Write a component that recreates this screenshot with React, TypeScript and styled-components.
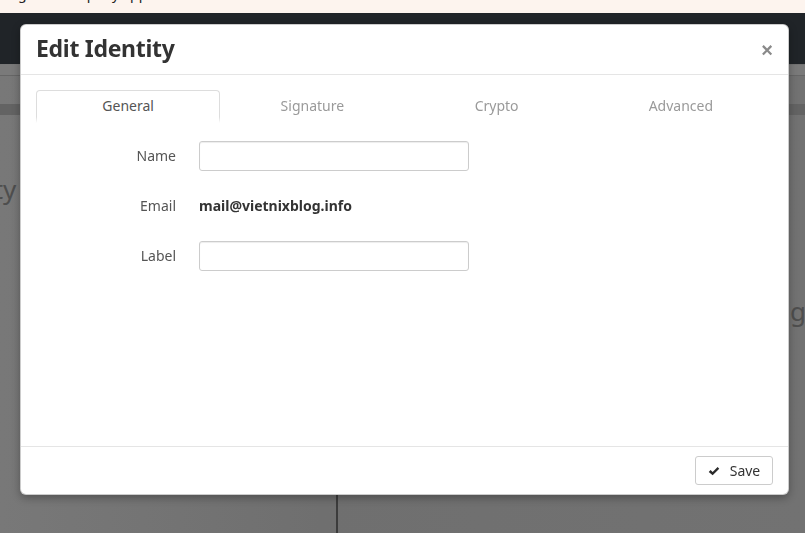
import React, { FC, useState } from 'react';
import styled, { createGlobalStyle, css } from 'styled-components';

const GlobalStyle = createGlobalStyle`
  html, body {
    margin: 0;
    padding: 0;
    overflow: hidden;
  }
  body {
    font-family: "Noto Sans", "Open Sans", "DejaVu Sans", sans-serif;
    font-size: 14px;
    color: #333;
  }
  * {
    box-sizing: border-box;
  }
`

// page behind the dialog, already dimmed by the backdrop
const PageStyle = styled.div`
  width: 100vw;
  height: 100vh;
  display: flex;
  flex-direction: column;
  background: linear-gradient(90deg, #787878 0%, #6f6f6f 40%, #727272 100%);
  overflow: hidden;
`

const TopStripStyle = styled.div`
  height: 13px;
  background: #fdf4ee;
  overflow: hidden;
  padding-left: 18px;
  & > span {
    display: block;
    margin-top: -15px;
    font-size: 14px;
    line-height: 18px;
    color: #222;
  }
`

const NavBarStyle = styled.div`
  height: 51px;
  background: #202428;
`

const BandStyle = styled.div<{ $tone: 'light' | 'dark'; $gap: number }>`
  height: 11px;
  margin-top: ${(p) => p.$gap}px;
  ${(p) =>
    p.$tone === 'light'
      ? css`background: #7a7a7a; border-bottom: 1px solid #666;`
      : css`background: #636363;`}
`

const ColumnsStyle = styled.div`
  flex: 1;
  display: grid;
  grid-template-columns: 338px 1fr;
`

const LeftColStyle = styled.div`
  border-right: 2px solid #3c3c3c;
  overflow: hidden;
  & > h2 {
    margin: 56px 0 0 -78px;
    font-size: 26px;
    font-weight: 400;
    color: #4e4e4e;
    white-space: nowrap;
  }
`

const RightColStyle = styled.div`
  overflow: hidden;
  display: flex;
  justify-content: flex-end;
  align-items: flex-start;
  & > h2 {
    margin: 178px -1px 0 0;
    font-size: 26px;
    font-weight: 400;
    color: #4e4e4e;
    white-space: nowrap;
  }
`

const BackdropStyle = styled.div`
  position: fixed;
  inset: 0;
`

const ModalStyle = styled.div`
  position: absolute;
  left: 20px;
  top: 24px;
  width: 769px;
  height: 471px;
  background: #fff;
  border: 1px solid rgba(0, 0, 0, 0.2);
  border-radius: 6px;
  box-shadow: 0 3px 9px rgba(0, 0, 0, 0.3);
  display: flex;
  flex-direction: column;
  overflow: hidden;
`

const ModalHeaderStyle = styled.div`
  height: 50px;
  flex-shrink: 0;
  padding: 0 15px 3px;
  display: flex;
  align-items: center;
  justify-content: space-between;
  border-bottom: 1px solid #e5e5e5;
  & > h1 {
    margin: 0;
    font-size: 23px;
    font-weight: 700;
    color: #333;
    letter-spacing: -0.3px;
  }
`

const CloseStyle = styled.button`
  border: none;
  background: none;
  padding: 0;
  margin-top: 4px;
  font-family: "Liberation Sans", sans-serif;
  font-size: 20px;
  font-weight: 700;
  line-height: 1;
  color: #8a8a8a;
  cursor: pointer;
`

const ModalBodyStyle = styled.div`
  flex: 1;
  padding: 15px 15px 0;
`

const TabsStyle = styled.div`
  display: grid;
  grid-template-columns: repeat(4, 1fr);
  height: 33px;
`

const TabStyle = styled.div<{ $active?: boolean }>`
  height: 100%;
  display: flex;
  align-items: center;
  justify-content: center;
  padding-bottom: 3px;
  border: 1px solid transparent;
  border-bottom: none;
  border-radius: 4px 4px 0 0;
  color: #9a9a9a;
  cursor: pointer;
  ${(p) =>
    p.$active &&
    css`
      color: #555;
      border-color: #ddd;
      background: #fff;
    `}
`

// the open tab's side borders fade into the panel below
const ActiveEdgeStyle = styled.div`
  position: relative;
  &::after {
    content: '';
    position: absolute;
    left: -1px;
    right: -1px;
    bottom: 0;
    height: 6px;
    background: linear-gradient(rgba(255, 255, 255, 0), #fff);
  }
`

const FormStyle = styled.div`
  display: grid;
  grid-template-columns: 140px 270px;
  column-gap: 23px;
  row-gap: 20px;
  margin-top: 18px;
`

const LabelStyle = styled.label`
  height: 30px;
  display: flex;
  align-items: center;
  justify-content: flex-end;
  padding-bottom: 2px;
  color: #555;
`

const InputStyle = styled.input`
  height: 30px;
  width: 100%;
  border: 1px solid #ccc;
  border-radius: 3px;
  box-shadow: inset 0 1px 1px rgba(0, 0, 0, 0.075);
  outline: none;
  padding: 4px 8px;
  font: inherit;
`

const StaticValueStyle = styled.div`
  height: 30px;
  display: flex;
  align-items: center;
  padding-bottom: 2px;
  font-weight: 700;
  color: #333;
`

const ModalFooterStyle = styled.div`
  height: 48px;
  flex-shrink: 0;
  border-top: 1px solid #e5e5e5;
  display: flex;
  justify-content: flex-end;
  align-items: flex-start;
  padding: 9px 15px 0;
`

const ButtonStyle = styled.button`
  height: 29px;
  width: 78px;
  display: flex;
  align-items: center;
  justify-content: center;
  gap: 10px;
  background: #fff;
  border: 1px solid #ccc;
  border-radius: 3px;
  font: inherit;
  color: #333;
  cursor: pointer;
  & > svg {
    width: 12px;
    height: 12px;
  }
`

const tabs = ['General', 'Signature', 'Crypto', 'Advanced']

const CheckIcon: FC = () => (
  <svg viewBox="0 0 16 16">
    <path d="M1 9.2 L3.4 6.8 L6.2 9.4 L12.8 2.6 L15 5 L6.2 13.6 Z" fill="#2a2a2a" />
  </svg>
)

const App: FC = () => {
  const [active, setActive] = useState(0)
  const [name, setName] = useState('')
  const [label, setLabel] = useState('')

  return <>
    <GlobalStyle />
    <PageStyle>
      <TopStripStyle><span>gmail.company.apps</span></TopStripStyle>
      <NavBarStyle />
      <BandStyle $tone="light" $gap={1} />
      <BandStyle $tone="dark" $gap={28} />
      <ColumnsStyle>
        <LeftColStyle><h2>Identity</h2></LeftColStyle>
        <RightColStyle><h2>Settings Listing</h2></RightColStyle>
      </ColumnsStyle>
    </PageStyle>

    <BackdropStyle>
      <ModalStyle>
        <ModalHeaderStyle>
          <h1>Edit Identity</h1>
          <CloseStyle>×</CloseStyle>
        </ModalHeaderStyle>
        <ModalBodyStyle>
          <TabsStyle>
            {tabs.map((t, i) => (
              i === active
                ? <ActiveEdgeStyle key={t}>
                    <TabStyle $active onClick={() => setActive(i)}>{t}</TabStyle>
                  </ActiveEdgeStyle>
                : <TabStyle key={t} onClick={() => setActive(i)}>{t}</TabStyle>
            ))}
          </TabsStyle>
          <FormStyle>
            <LabelStyle>Name</LabelStyle>
            <InputStyle value={name} onChange={(e) => setName(e.target.value)} />
            <LabelStyle>Email</LabelStyle>
            <StaticValueStyle>mail@vietnixblog.info</StaticValueStyle>
            <LabelStyle>Label</LabelStyle>
            <InputStyle value={label} onChange={(e) => setLabel(e.target.value)} />
          </FormStyle>
        </ModalBodyStyle>
        <ModalFooterStyle>
          <ButtonStyle>
            <CheckIcon />
            Save
          </ButtonStyle>
        </ModalFooterStyle>
      </ModalStyle>
    </BackdropStyle>
  </>
}

export default App
